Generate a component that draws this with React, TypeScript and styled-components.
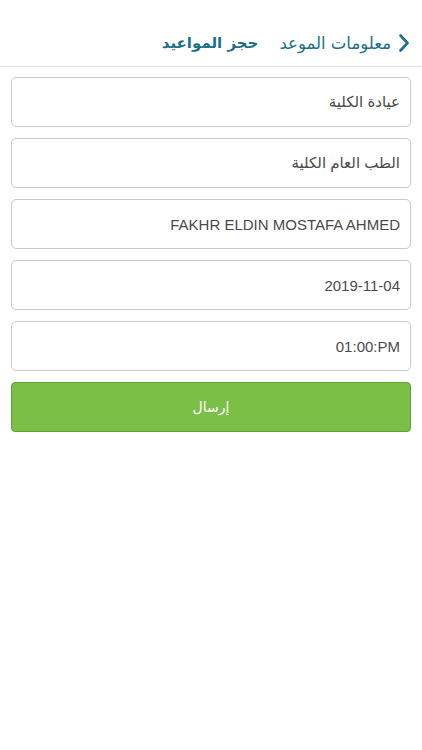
import React, { FC } from 'react';
import styled, { createGlobalStyle } from 'styled-components';

const GlobalStyle = createGlobalStyle`
    html, body {
        margin: 0;
        padding: 0;
        background: #ffffff;
    }
    body {
        font-family: "Liberation Sans", "DejaVu Sans", "Noto Sans", sans-serif;
    }
`;

const fields = [
    'عيادة الكلية',
    'الطب العام الكلية',
    'FAKHR ELDIN MOSTAFA AHMED',
    '2019-11-04',
    '01:00:PM',
];

const App: FC = () => {
    return (
        <Page dir="rtl">
            <GlobalStyle />
            <Header>
                <BackButton aria-label="back">
                    <svg width="12" height="18" viewBox="0 0 12 18">
                        <polyline
                            points="2.5,1.5 9.5,9 2.5,16.5"
                            fill="none"
                            stroke="#1d6f87"
                            strokeWidth="2.6"
                            strokeLinecap="round"
                            strokeLinejoin="round"
                        />
                    </svg>
                </BackButton>
                <BackLabel>معلومات الموعد</BackLabel>
                <Title>حجز المواعيد</Title>
            </Header>
            <Form>
                {fields.map((value) => (
                    <Field key={value}>{value}</Field>
                ))}
                <SubmitButton>إرسال</SubmitButton>
            </Form>
        </Page>
    );
};

const Page = styled.div`
    width: 422px;
    min-height: 750px;
    background: #fff;
`;

const Header = styled.div`
    display: flex;
    align-items: center;
    height: 67px;
    padding: 20px 12px 0 0;
    box-sizing: border-box;
    border-bottom: 1px solid #e3e3e3;
    gap: 5px;
`;

const BackButton = styled.div`
    display: flex;
    align-items: center;
    width: 14px;
    height: 18px;
`;

const BackLabel = styled.span`
    font-family: "DejaVu Sans", "Noto Sans", sans-serif;
    font-size: 16.5px;
    color: #1d6f87;
    margin-left: 16px;
`;

const Title = styled.span`
    font-family: "DejaVu Sans", "Noto Sans", sans-serif;
    font-size: 15px;
    font-weight: bold;
    color: #1d6f87;
`;

const Form = styled.div`
    display: flex;
    flex-direction: column;
    gap: 11px;
    padding: 10px 11px;
`;

const Field = styled.div`
    display: flex;
    align-items: center;
    height: 50px;
    box-sizing: border-box;
    padding: 0 10px;
    border: 1px solid #c9c9c9;
    border-radius: 5px;
    font-size: 15px;
    color: #4a4a4a;
    unicode-bidi: plaintext;
    direction: rtl;
`;

const SubmitButton = styled.button`
    height: 50px;
    border: 1px solid #639f38;
    border-radius: 4px;
    background: #7cbf46;
    color: #fff;
    font-family: "DejaVu Sans", "Noto Sans", sans-serif;
    font-size: 14px;
    cursor: pointer;
`;

export default App;
